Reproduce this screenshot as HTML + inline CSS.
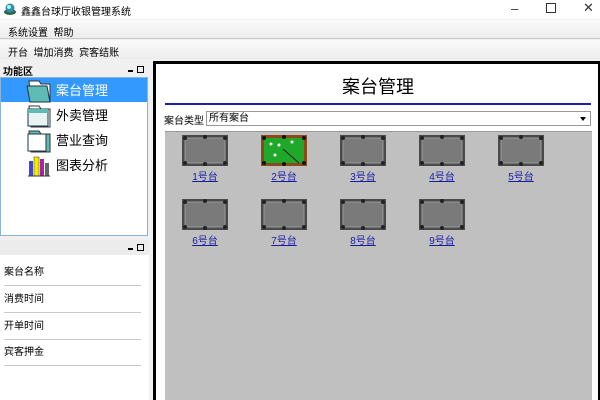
<!DOCTYPE html><html><head><meta charset="utf-8"><style>
*{margin:0;padding:0;box-sizing:border-box}
body{width:600px;height:400px;overflow:hidden;background:#f0f0f0;font-family:"Liberation Sans","Noto Sans CJK SC",sans-serif;font-size:10px;color:#000;position:relative}
.a{position:absolute}
.lnk{position:absolute;color:#1a1aa8;text-decoration:underline;font-size:10px;width:60px;text-align:center}
.it{position:absolute;left:4px;width:137px;height:26px;border-bottom:1px solid #c8c8c8;font-size:10px;line-height:26px}
</style></head><body>
<div class="a" style="left:0;top:0;width:600px;height:19px;background:#fff"></div>
<svg class="a" style="left:3px;top:2px" width="14" height="14"><ellipse cx="7" cy="10" rx="6" ry="3" fill="#2a6a4a"/><circle cx="7" cy="6" r="4.5" fill="#3a8ab0"/><circle cx="6" cy="5" r="2" fill="#9fd"/></svg>
<div class="a" style="left:21px;top:3px;font-size:10px">鑫鑫台球厅收银管理系统</div>
<div class="a" style="left:511px;top:1px;font-size:13px;color:#333">–</div>
<div class="a" style="left:546px;top:3px;width:10px;height:10px;border:1px solid #333"></div>
<div class="a" style="left:583px;top:0px;font-size:13px;color:#333">✕</div>
<div class="a" style="left:0;top:20px;width:600px;height:19px;background:linear-gradient(#fafafa,#ececec);border-bottom:1px solid #c8c8c8"></div>
<div class="a" style="left:8px;top:24px">系统设置&nbsp;&nbsp;帮助</div>
<div class="a" style="left:0;top:40px;width:600px;height:19px;background:linear-gradient(#fafafa,#ececec)"></div>
<div class="a" style="left:8px;top:44px">开台&nbsp;&nbsp;增加消费&nbsp;&nbsp;宾客结账</div>
<div class="a" style="left:0;top:61px;width:149px;height:16px;background:#f0f0f0"></div>
<div class="a" style="left:3px;top:63px;font-weight:bold">功能区</div>
<div class="a" style="left:128px;top:70px;width:5px;height:2px;background:#000"></div>
<div class="a" style="left:137px;top:66px;width:7px;height:7px;border:1px solid #000"></div>
<div class="a" style="left:0;top:77px;width:148px;height:159px;background:#fff;border:1px solid #8ab4d8"></div>
<div class="a" style="left:1px;top:78px;width:146px;height:24px;background:#3399ff"></div>
<svg class="a" style="left:26px;top:78px" width="26" height="100">
<g><path d="M3 3h10l2 3h9v18H5z" fill="#fff" stroke="#333"/><path d="M1 8h20l3 16H4z" fill="#5fbcb4" stroke="#234"/></g>
<g transform="translate(0,25)"><path d="M3 3h10l2 3h9v18H5z" fill="#fff" stroke="#333"/><path d="M2 6h20v17H2z" fill="#e8f4f4" stroke="#234"/><path d="M2 6h20v4H2z" fill="#5fbcb4"/></g>
<g transform="translate(0,50)"><path d="M3 3h10l2 3h9v18H5z" fill="#5fbcb4" stroke="#333"/><path d="M2 6h18v17H2z" fill="#fff" stroke="#234"/></g>
<g transform="translate(0,75)"><rect x="3" y="8" width="4" height="15" fill="#44c"/><rect x="8" y="4" width="5" height="19" fill="#ee0" stroke="#333" stroke-width=".5"/><rect x="14" y="6" width="4" height="17" fill="#a2a"/><rect x="19" y="10" width="4" height="13" fill="#666"/><path d="M2 23h22" stroke="#333"/></g>
</svg>
<div class="a" style="left:56px;top:80px;font-size:13px;color:#fff">案台管理</div>
<div class="a" style="left:56px;top:105px;font-size:13px">外卖管理</div>
<div class="a" style="left:56px;top:130px;font-size:13px">营业查询</div>
<div class="a" style="left:56px;top:155px;font-size:13px">图表分析</div>
<div class="a" style="left:0;top:240px;width:149px;height:15px;background:#ececec"></div>
<div class="a" style="left:128px;top:248px;width:5px;height:2px;background:#000"></div>
<div class="a" style="left:137px;top:244px;width:7px;height:7px;border:1px solid #000"></div>
<div class="a" style="left:0;top:255px;width:149px;height:145px;background:#fff"></div>
<div class="it" style="top:260px">案台名称</div>
<div class="it" style="top:287px">消费时间</div>
<div class="it" style="top:314px">开单时间</div>
<div class="it" style="top:340px">宾客押金</div>
<div class="a" style="left:153px;top:61px;width:447px;height:339px;background:#000"></div>
<div class="a" style="left:156px;top:64px;width:442px;height:336px;background:#fff"></div>
<div class="a" style="left:342px;top:73px;font-size:18px">案台管理</div>
<div class="a" style="left:165px;top:103px;width:426px;height:2px;background:#2020b0"></div>
<div class="a" style="left:164px;top:112px">案台类型</div>
<div class="a" style="left:206px;top:111px;width:385px;height:15px;border:1px solid #999;background:#fff;padding-left:2px;line-height:13px">所有案台</div>
<div class="a" style="left:580px;top:117px;border-left:3px solid transparent;border-right:3px solid transparent;border-top:4px solid #000"></div>
<div class="a" style="left:165px;top:131px;width:427px;height:269px;background:#c0c0c0;border-top:1px solid #999"></div>
<svg width="0" height="0" style="position:absolute"><defs>
<g id="t"><rect x="0" y="0" width="46" height="31" fill="#4a4a4a"/><rect x="3" y="3" width="40" height="25" fill="#7a7a7a" stroke="#999"/><g fill="#222"><circle cx="3" cy="3" r="2"/><circle cx="23" cy="2" r="2"/><circle cx="43" cy="3" r="2"/><circle cx="3" cy="28" r="2"/><circle cx="23" cy="29" r="2"/><circle cx="43" cy="28" r="2"/></g></g>
</defs></svg>
<svg class="a" style="left:182px;top:135px" width="420" height="100">
<use href="#t" x="0" y="0"/>
<g transform="translate(79,0)"><rect width="46" height="31" fill="#8a4a1a"/><rect x="3" y="3" width="40" height="25" fill="#1fa82a"/><g fill="#111"><circle cx="3" cy="3" r="2"/><circle cx="23" cy="2" r="2"/><circle cx="43" cy="3" r="2"/><circle cx="3" cy="28" r="2"/><circle cx="23" cy="29" r="2"/><circle cx="43" cy="28" r="2"/></g><g fill="#ffe"><circle cx="10" cy="9" r="1.5"/><circle cx="18" cy="10" r="1.5"/><circle cx="31" cy="7" r="1.5"/><circle cx="14" cy="20" r="1.5"/></g><path d="M22 14l16 14" stroke="#222"/></g>
<use href="#t" x="158" y="0"/><use href="#t" x="237" y="0"/><use href="#t" x="316" y="0"/>
<use href="#t" x="0" y="64"/><use href="#t" x="79" y="64"/><use href="#t" x="158" y="64"/><use href="#t" x="237" y="64"/>
</svg>
<div class="lnk" style="left:175px;top:168px">1号台</div>
<div class="lnk" style="left:254px;top:168px">2号台</div>
<div class="lnk" style="left:333px;top:168px">3号台</div>
<div class="lnk" style="left:412px;top:168px">4号台</div>
<div class="lnk" style="left:491px;top:168px">5号台</div>
<div class="lnk" style="left:175px;top:232px">6号台</div>
<div class="lnk" style="left:254px;top:232px">7号台</div>
<div class="lnk" style="left:333px;top:232px">8号台</div>
<div class="lnk" style="left:412px;top:232px">9号台</div>
</body></html>
